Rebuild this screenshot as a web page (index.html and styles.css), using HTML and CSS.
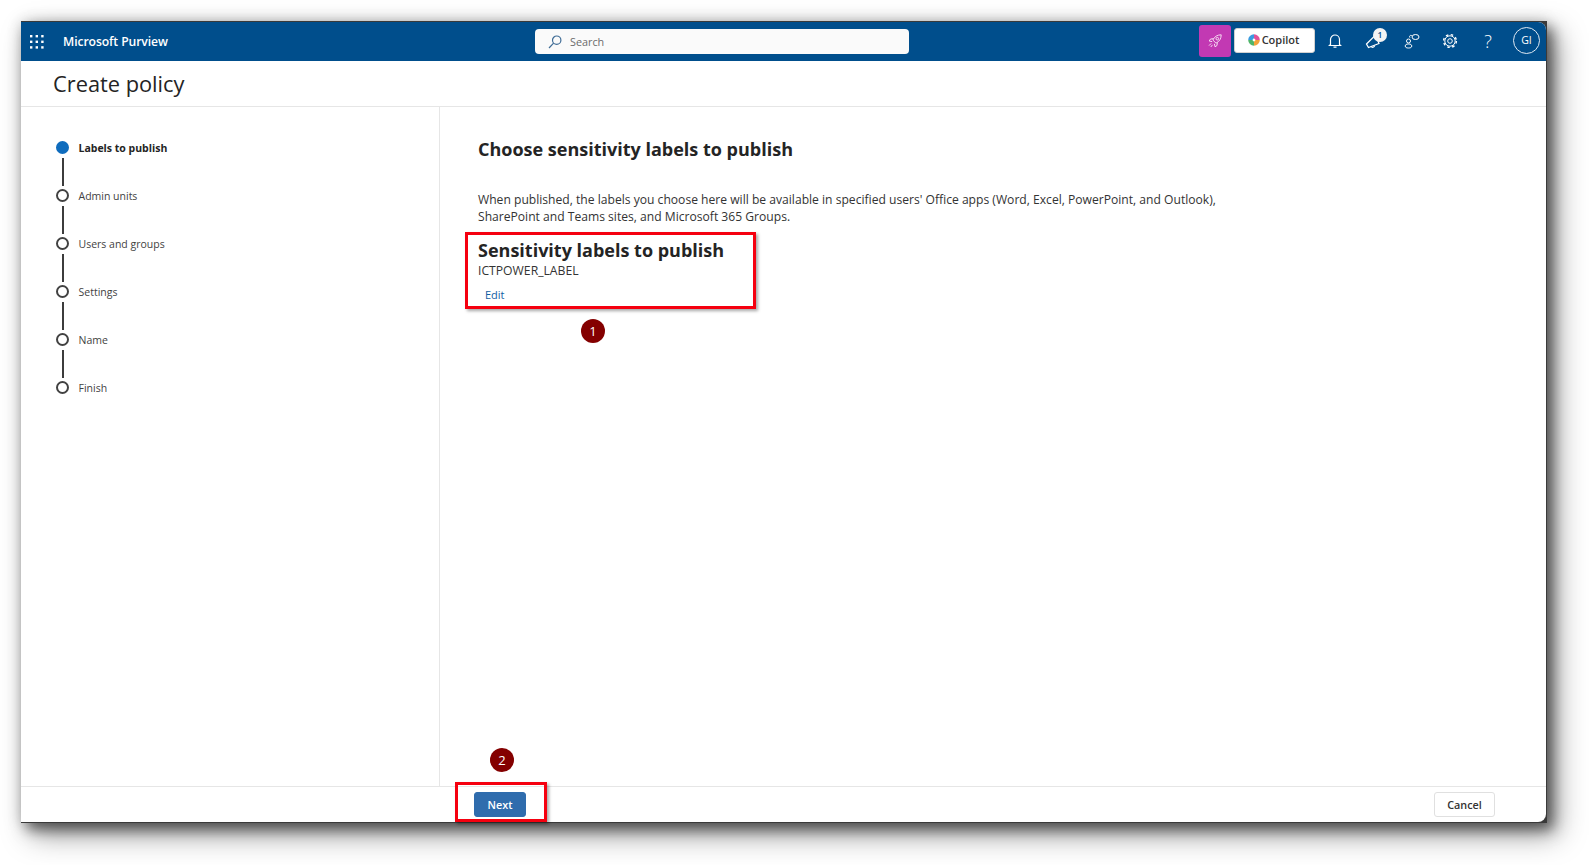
FILE: index.html
```html
<!DOCTYPE html>
<html lang="en">
<head>
<meta charset="utf-8">
<title>Create policy - Microsoft Purview</title>
<link rel="stylesheet" href="styles.css">
</head>
<body>
<div class="shot">
  <div class="window">
    <header class="topbar">
      <div class="brand">
        <svg class="waffle" width="14" height="14" viewBox="0 0 14 14" fill="#fff"><rect x="0" y="0" width="2.4" height="2.4"/><rect x="5.6" y="0" width="2.4" height="2.4"/><rect x="11.2" y="0" width="2.4" height="2.4"/><rect x="0" y="5.6" width="2.4" height="2.4"/><rect x="5.6" y="5.6" width="2.4" height="2.4"/><rect x="11.2" y="5.6" width="2.4" height="2.4"/><rect x="0" y="11.2" width="2.4" height="2.4"/><rect x="5.6" y="11.2" width="2.4" height="2.4"/><rect x="11.2" y="11.2" width="2.4" height="2.4"/></svg>
        <span class="brand-name">Microsoft Purview</span>
      </div>
      <div class="search">
        <svg width="14" height="14" viewBox="0 0 14 14" fill="none" stroke="#3f6c96" stroke-width="1.2"><circle cx="8.7" cy="5.2" r="4.2"/><path d="M5.6 8.2 1 13"/></svg>
        <span>Search</span>
      </div>
      <div class="actions">
        <button class="rocket" aria-label="Rocket">
          <svg width="16" height="16" viewBox="0 0 16 16" fill="none" stroke="#f6dcf2" stroke-width="1"><path d="M5.800 7C7.500 3.500 10.500 1.800 14.200 1.800 14.200 5.500 12.500 8.500 9 10.200L5.800 7Z"/><circle cx="10.300" cy="5.700" r="1.300"/><path d="M6.500 5.700 3.500 6 2.200 8l3 .6M10.300 9.500 10 12.500 8 13.800l-.6-3M4.200 10.400 2 12.600M5.500 11.800 3.800 14"/></svg>
        </button>
        <button class="copilot">
          <svg width="12" height="12" viewBox="0 0 12 12" fill="none" stroke-width="4.400"><path d="M6 2.400A3.600 3.600 0 0 1 9.600 6" stroke="#e0539a"/><path d="M9.600 6A3.600 3.600 0 0 1 6 9.600" stroke="#f2a33a"/><path d="M6 9.600A3.600 3.600 0 0 1 2.400 6" stroke="#4fb56a"/><path d="M2.400 6A3.600 3.600 0 0 1 6 2.400" stroke="#3a9be0"/></svg>
          <span>Copilot</span>
        </button>
        <span class="icon" aria-label="Notifications">
          <svg width="14" height="16" viewBox="0 0 14 16" fill="none" stroke="#fff" stroke-width="1.200"><path d="M2.500 11.500V6.500a4.500 4.500 0 0 1 9 0v5l1 1h-11l1-1Z"/><path d="M5.500 14.200h3"/></svg>
        </span>
        <span class="icon feedback" aria-label="Feedback">
          <svg width="18" height="18" viewBox="0 0 18 18" fill="none" stroke="#fff" stroke-width="1.200"><path d="M1.500 12 10.500 3 14 11.500 3.500 15.500Z"/><path d="M6 14.500a2 2 0 0 0 3.600-1"/></svg>
          <span class="count">1</span>
        </span>
        <span class="icon" aria-label="Community">
          <svg width="16" height="16" viewBox="0 0 16 16" fill="none" stroke="#fff" stroke-width="1"><circle cx="4.500" cy="8" r="2"/><path d="M1.200 13c0-1.300 1.300-2 3.300-2s3.300.7 3.300 2c0 1.500-1.500 2-3.300 2s-3.300-.5-3.300-2Z"/><ellipse cx="11.500" cy="4" rx="3.500" ry="2.500"/><path d="M8.200 3.200C7.800 2.400 7 2.200 6.300 2.500 5.400 2.900 5.300 4 6 4.700"/></svg>
        </span>
        <span class="icon" aria-label="Settings">
          <svg width="16" height="16" viewBox="0 0 16 16" fill="none" stroke="#fff"><circle cx="8" cy="8" r="2.300" stroke-width="1"/><circle cx="8" cy="8" r="5.200" stroke-width="1"/><circle cx="8" cy="8" r="6.400" stroke-width="1.400" stroke-dasharray="2.500 2.527"/></svg>
        </span>
        <span class="icon help">?</span>
        <span class="avatar">GI</span>
      </div>
    </header>

    <div class="titlebar"><h1>Create policy</h1></div>

    <div class="main">
      <nav class="steps">
        <div class="step active"><i class="dot"></i><span>Labels to publish</span></div>
        <div class="step"><i class="dot"></i><span>Admin units</span></div>
        <div class="step"><i class="dot"></i><span>Users and groups</span></div>
        <div class="step"><i class="dot"></i><span>Settings</span></div>
        <div class="step"><i class="dot"></i><span>Name</span></div>
        <div class="step last"><i class="dot"></i><span>Finish</span></div>
      </nav>
      <section class="content">
        <h2>Choose sensitivity labels to publish</h2>
        <p class="intro">When published, the labels you choose here will be available in specified users' Office apps (Word, Excel, PowerPoint, and Outlook), SharePoint and Teams sites, and Microsoft 365 Groups.</p>
        <h3>Sensitivity labels to publish</h3>
        <div class="label-name">ICTPOWER_LABEL</div>
        <a class="edit" href="#">Edit</a>
      </section>
    </div>

    <footer class="footer">
      <button class="btn primary">Next</button>
      <button class="btn">Cancel</button>
    </footer>
  </div>

  <div class="mark mark-labels"></div>
  <div class="mark mark-next"></div>
  <div class="badge badge-one">1</div>
  <div class="badge badge-two">2</div>
</div>
</body>
</html>
```

FILE: styles.css
```css
* { box-sizing: border-box; }
html, body { margin: 0; height: 100%; background: #fff; overflow: hidden; }
body {
  padding: 21px 0 0 21px;
  font-family: "Open Sans", "Noto Sans", "Liberation Sans", sans-serif;
  color: #242424;
}
.shot {
  position: relative;
  width: 1526px;
  height: 802px;
  background: #3a3a3a;
  box-shadow: 6px 7px 13px rgba(0,0,0,.5), 10px 12px 28px rgba(0,0,0,.38), 0 0 14px rgba(0,0,0,.15);
  padding: 1px 1px 1px 0;
}
.window {
  height: 100%;
  background: #fff;
  border-radius: 0 8px 8px 0;
  overflow: hidden;
  display: flex;
  flex-direction: column;
}
.topbar {
  flex: 0 0 39px;
  background: #004e8c;
  display: flex;
  align-items: center;
  padding-left: 9px;
  color: #fff;
}
.brand { display: flex; align-items: center; gap: 19px; width: 505px; flex: none; }
.waffle { flex: none; }
.brand-name { font-size: 12.200px; font-weight: 600; letter-spacing: -.1px; white-space: nowrap; }
.search {
  width: 374px;
  height: 25px;
  flex: none;
  background: #fafafa;
  border-radius: 4px;
  display: flex;
  align-items: center;
  gap: 8px;
  padding-left: 13px;
  color: #6b6b6b;
  font-size: 10.800px;
}
.actions { display: flex; align-items: center; margin: 0 0 2px 290px; flex: none; }
.rocket {
  width: 32px;
  height: 32px;
  background: #c239b3;
  border: 0;
  border-radius: 3px;
  padding: 0;
  display: flex;
  align-items: center;
  justify-content: center;
}
.copilot {
  margin-left: 3px;
  width: 81px;
  height: 25px;
  background: #fff;
  border: 1px solid #d1d1d1;
  border-radius: 3px;
  display: flex;
  align-items: center;
  justify-content: center;
  gap: 2px;
  padding: 0 2px 2px 0;
  font: 600 11px "Open Sans", sans-serif;
  color: #333;
}
.icon {
  position: relative;
  width: 38px;
  display: flex;
  justify-content: center;
  align-items: center;
  flex: none;
}
.copilot + .icon { margin-left: 1px; }
.feedback { margin-left: 1px; }
.count {
  position: absolute;
  top: -4px;
  left: 18px;
  width: 14px;
  height: 14px;
  border-radius: 50%;
  background: #f3f3f3;
  color: #004e8c;
  font-size: 8.500px;
  font-weight: 600;
  line-height: 14px;
  text-align: center;
}
.help { font-size: 18px; line-height: 20px; font-weight: 300; }
.avatar {
  margin-left: 6px;
  width: 27px;
  height: 27px;
  border: 1px solid #dfe9f2;
  border-radius: 50%;
  font-size: 10.500px;
  font-weight: 500;
  line-height: 25px;
  text-align: center;
  flex: none;
}
.titlebar {
  flex: 0 0 46px;
  border-bottom: 1px solid #e6e6e6;
  padding: 0 0 1px 32px;
  display: flex;
  align-items: center;
}
h1 { margin: 0; font-size: 21.800px; font-weight: 500; color: #242424; }
.main { flex: 1; display: flex; min-height: 0; }
.steps {
  flex: 0 0 419px;
  border-right: 1px solid #e6e6e6;
  padding: 34px 0 0 35px;
}
.step {
  position: relative;
  height: 48px;
  display: flex;
  align-items: flex-start;
  gap: 9.500px;
  font-size: 10.500px;
  line-height: 14px;
  color: #424242;
}
.step::after {
  content: "";
  position: absolute;
  left: 6px;
  top: 17px;
  width: 1.500px;
  height: 28px;
  background: #3c3c3c;
}
.step.last::after { display: none; }
.dot {
  flex: none;
  width: 13px;
  height: 13px;
  border: 2px solid #424242;
  border-radius: 50%;
  background: #fff;
}
.step.active { color: #242424; font-weight: 700; }
.active .dot { background: #0f6cbd; border-color: #0f6cbd; }
.content { flex: 1; padding: 29px 0 0 38px; }
h2, h3 { margin: 0; font-size: 18px; line-height: 26px; font-weight: 700; color: #242424; }
.intro {
  margin: 29px 0 0;
  width: 745px;
  font-size: 12.120px;
  line-height: 17px;
  color: #333;
}
h3 { margin-top: 12px; }
.label-name { font-size: 12.200px; line-height: 17px; margin-top: -1px; color: #333; }
.edit {
  display: block;
  margin: 8px 0 0 7px;
  font-size: 11px;
  line-height: 16px;
  color: #115ea3;
  text-decoration: none;
}
.footer {
  flex: 0 0 36px;
  border-top: 1px solid #e6e6e6;
  display: flex;
  justify-content: space-between;
  align-items: flex-start;
  padding: 5px 51px 0 453px;
}
.btn {
  height: 25px;
  width: 61px;
  border: 1px solid #e0e0e0;
  border-radius: 3px;
  background: #fff;
  font: 600 10.800px "Open Sans", sans-serif;
  color: #333;
  padding: 0;
}
.btn.primary { width: 52px; background: #2f6cad; border-color: #2f6cad; color: #fff; }
.mark {
  position: absolute;
  border: 3px solid #f5000f;
  box-shadow: 2px 2px 3px rgba(0,0,0,.35);
}
.mark-labels { left: 444px; top: 211px; width: 291px; height: 77px; }
.mark-next { left: 434px; top: 761px; width: 92px; height: 40px; }
.badge {
  position: absolute;
  width: 24px;
  height: 24px;
  border-radius: 50%;
  background: #840000;
  color: #fff;
  font-size: 13px;
  line-height: 24px;
  text-align: center;
}
.badge-one { left: 560px; top: 298px; }
.badge-two { left: 469px; top: 727px; }
```
